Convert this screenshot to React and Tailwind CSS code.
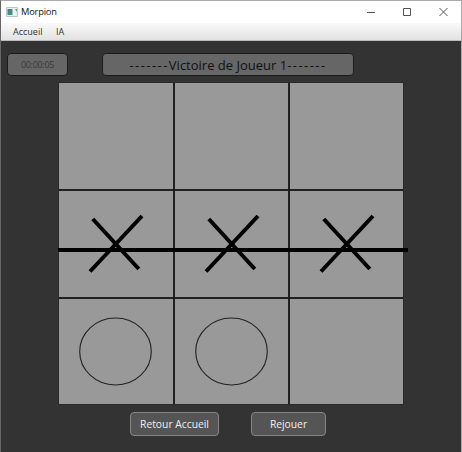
import React from 'react';

const cells = ['', '', '', 'X', 'X', 'X', 'O', 'O', ''];

function Cross() {
  return (
    <svg className="block h-[105px] w-[113px]" viewBox="0 0 113 105" fill="none" stroke="#000" strokeWidth="4">
      <path d="M33.8 28 79.8 78M83 25 31 80.5" />
    </svg>
  );
}

function Circle() {
  return (
    <svg className="block h-[105px] w-[113px]" viewBox="0 0 113 105" fill="none" stroke="#222" strokeWidth="1.1">
      <ellipse cx="56.5" cy="52.5" rx="35.8" ry="33.5" />
    </svg>
  );
}

function Cell({ value }) {
  return (
    <div className="bg-[#999] shadow-[0_0_0_0.5px_#333]">
      {value === 'X' && <Cross />}
      {value === 'O' && <Circle />}
    </div>
  );
}

function TitleBar() {
  return (
    <div className="flex h-[22px] items-center bg-white">
      <svg className="ml-[5px] block" width="12" height="10" viewBox="0 0 12 10">
        <defs>
          <linearGradient id="app" x1="0" y1="0" x2="1" y2="1">
            <stop offset="0" stopColor="#4578a8" />
            <stop offset="1" stopColor="#459a68" />
          </linearGradient>
        </defs>
        <path d="M.5.5h11v9H.5z" fill="#e9f1f2" stroke="#bac6ce" />
        <path d="M1.5 2h5v6h-5z" fill="url(#app)" />
        <path d="M9 2h2v3z" fill="#59a282" />
      </svg>
      <span className="ml-[3px] text-[9.3px] leading-none tracking-[-0.2px] text-[#111]">Morpion</span>
      <svg className="ml-auto mr-[13px] block" width="82" height="10" viewBox="0 0 82 10" fill="none" stroke="#555" strokeWidth="1">
        <path d="M1 5.5h8M37.5 1.5h7v7h-7zM73.5 1l8 8M81.5 1l-8 8" />
      </svg>
    </div>
  );
}

export default function App() {
  return (
    <div className="flex h-[452px] w-[462px] flex-col border-x border-t border-[#aaa] border-l-[#666] bg-[#333] font-['Open_Sans','Noto_Sans',sans-serif]">
      <TitleBar />
      <div className="flex h-[18px] items-center border-b border-[#bbb] bg-linear-to-b from-[#fafafa] to-[#e2e2e2] pl-[12px] text-[9px] leading-none text-[#333]">
        <span className="w-[43px]">Accueil</span>
        <span>IA</span>
      </div>
      <div className="mt-[12px] flex h-[23px] pl-[6px]">
        <div className="flex w-[61px] items-center justify-center rounded-[4px] border border-[#1b1b1b] bg-[#666] text-[9px] leading-none tracking-[-0.3px] text-[#3a3a3a]">
          00:00:05
        </div>
        <div className="ml-[34px] flex w-[252px] items-center justify-center whitespace-nowrap rounded-[4px] border border-[#1b1b1b] bg-[#666] pt-px text-[13px] leading-none text-[#111]">
          <span className="tracking-[1.45px]">-------</span>
          <span>Victoire de Joueur 1</span>
          <span className="tracking-[1.45px]">-------</span>
        </div>
      </div>
      <div className="relative ml-[57px] mt-[6px] grid h-[323px] w-[346px] shrink-0 grid-cols-[114px_113px_113px] grid-rows-[106px_106px_105px] gap-[2px] border border-[#222] bg-[#111]">
        {cells.map((value, i) => (
          <Cell key={i} value={value} />
        ))}
        <div className="absolute left-[-1px] top-[165px] h-[4px] w-[350px] bg-black" />
      </div>
      <div className="mt-[7px] flex h-[24px] shrink-0 pl-[129px] text-[10.3px] leading-none text-[#eee]">
        <button className="w-[89px] rounded-[4px] border border-[#858585] bg-[#555]">Retour Accueil</button>
        <button className="ml-[32px] w-[75px] rounded-[4px] border border-[#858585] bg-[#555]">Rejouer</button>
      </div>
    </div>
  );
}
